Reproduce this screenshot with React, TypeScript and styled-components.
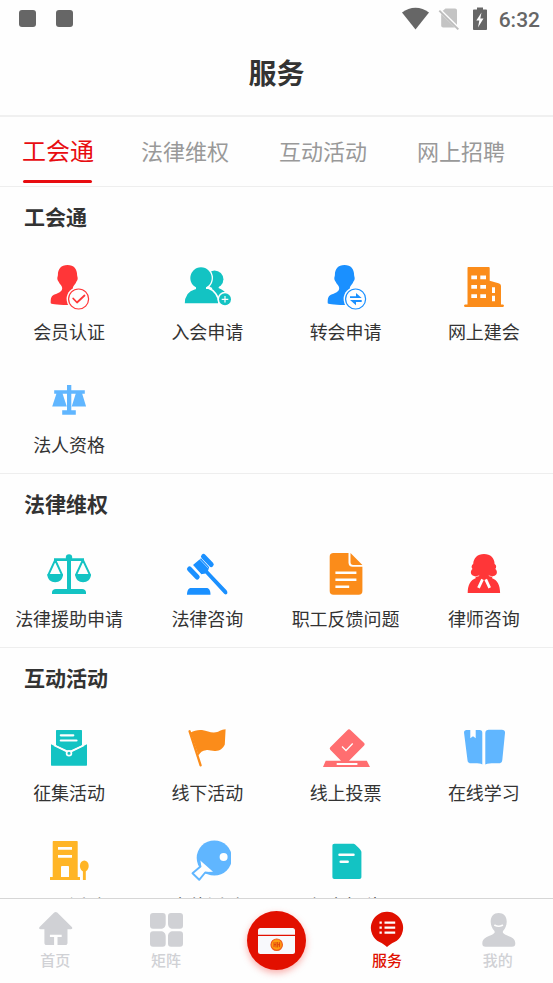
import React from "react";
import styled, { createGlobalStyle } from "styled-components";

const GlobalStyle = createGlobalStyle`
  * { box-sizing: border-box; }
  body {
    margin: 0;
    background: #fefefe;
    color: #333;
    font-family: "Noto Sans CJK SC", "Noto Sans", sans-serif;
  }
  button { font: inherit; border: 0; background: none; padding: 0; cursor: pointer; }
`;

const Screen = styled.div`
  display: flex;
  flex-direction: column;
  height: 100vh;
  overflow: hidden;
`;

const StatusBar = styled.div`
  display: flex;
  align-items: center;
  justify-content: space-between;
  height: 37px;
  padding: 0 13px 0 19px;
  color: #666;
`;

const StatusGroup = styled.div<{ $gap: number }>`
  display: flex;
  align-items: center;
  gap: ${(p) => p.$gap}px;
`;

const Notice = styled.span`
  width: 17px;
  height: 17px;
  border-radius: 3px;
  background: #666;
`;

const Clock = styled.time`
  padding-top: 2px;
  font: 500 21px/26px Roboto, sans-serif;
`;

const Header = styled.header`
  display: flex;
  justify-content: center;
  height: 80px;
  padding-top: 15px;
  border-bottom: 2px solid #f0f0f0;
`;

const Title = styled.h1`
  margin: 0;
  font-size: 28px;
  line-height: 40px;
  font-weight: 700;
`;

const Tabs = styled.nav`
  display: flex;
  flex-shrink: 0;
  gap: 50px;
  height: 70px;
  padding: 0 25px;
  border-bottom: 1px solid #eee;
  overflow: hidden;
`;

const Tab = styled.button<{ $active: boolean }>`
  position: relative;
  flex-shrink: 0;
  height: 69px;
  margin: ${(p) => (p.$active ? "0 -3px" : "0")};
  padding-bottom: 4px;
  font-size: ${(p) => (p.$active ? 24 : 22)}px;
  line-height: 32px;
  color: ${(p) => (p.$active ? "#e80c10" : "#999")};
  white-space: nowrap;

  &::after {
    content: "";
    position: absolute;
    left: 1px;
    right: 2px;
    bottom: 3px;
    height: 3px;
    border-radius: 2px;
    background: ${(p) => (p.$active ? "#e80c10" : "transparent")};
  }
`;

const Content = styled.main`
  flex: 1;
  min-height: 0;
  overflow-y: auto;
  scrollbar-width: none;
`;

const Section = styled.section`
  border-bottom: 1px solid #eee;
`;

const SectionTitle = styled.h2`
  margin: 0;
  padding: 14px 24px 16px;
  font-size: 21px;
  line-height: 30px;
  font-weight: 700;
`;

const Grid = styled.div`
  display: grid;
  grid-template-columns: repeat(4, 1fr);
`;

const Item = styled.button`
  display: flex;
  flex-direction: column;
  align-items: center;
  gap: 7px;
  padding: 16px 0;
  color: #333;
  font-size: 18px;
  line-height: 26px;
  white-space: nowrap;

  svg { display: block; width: 48px; height: 48px; }
`;

const BottomNav = styled.nav`
  display: grid;
  grid-template-columns: repeat(5, 1fr);
  flex-shrink: 0;
  height: 85px;
  border-top: 1px solid #d6d6d6;
  background: #fefefe;
`;

const NavItem = styled.button<{ $active?: boolean }>`
  display: flex;
  flex-direction: column;
  align-items: center;
  gap: 2px;
  padding-top: 12px;
  color: ${(p) => (p.$active ? "#e01000" : "#d0d1d5")};

  svg { display: block; width: 36px; height: 36px; }
`;

const NavLabel = styled.span`
  font-size: 15px;
  line-height: 22px;
  font-weight: 500;
`;

const CardButton = styled.span`
  display: block;
  width: 59px;
  height: 59px;
  border-radius: 50%;
  background: #e21000;
  box-shadow: 0 3px 7px rgba(240, 30, 20, 0.35);

  && svg { width: 59px; height: 59px; }
`;

const RED = "#ff3638";
const TEAL = "#13c3c3";
const BLUE = "#1a90ff";
const ORANGE = "#fb8c1a";
const SKY = "#60b6ff";

const Icon = ({ children }: { children: React.ReactNode }) => (
  <svg viewBox="0 0 48 48" fill="none" aria-hidden="true">{children}</svg>
);

const Bust = ({ color }: { color: string }) => (
  <>
    <path
      fill={color}
      d="M22.500 2C16 2 12.900 6 12.900 12c0 1.600-.9 2.400-.5 4.200.3 1.500 1 1.800 1.400 2.800 1 2.500 3.400 3.600 3.400 6 0 3.500-2.800 4.700-7 6.200-4 1.500-4.500 3.400-4.500 8.800 0 1.200 5 1.800 17 2l10-6-4.900-10c0-3.500 2.500-4.500 3.400-7 .4-1 1.100-1.300 1.400-2.800.4-1.800-.5-2.600-.5-4.200C32.100 6 29 2 22.500 2Z"
    />
    <circle cx="33.600" cy="36" r="12" fill="#fefefe" />
    <circle cx="33.600" cy="36" r="10" stroke={color} strokeWidth="1.200" />
  </>
);

const MemberIcon = () => (
  <Icon>
    <Bust color={RED} />
    <path d="m28.200 35.500 3.800 4 7.500-7" stroke={RED} strokeWidth="1.800" strokeLinecap="round" strokeLinejoin="round" />
  </Icon>
);

const JoinIcon = () => (
  <Icon>
    <circle cx="31.500" cy="16.300" r="8.900" fill={TEAL} />
    <path d="M29 23h7l-.5 2C40 27 43 29 44.500 33v6H30Z" fill={TEAL} />
    <circle cx="18" cy="15" r="12" fill="#fefefe" />
    <path d="M12 25.500C6 27 1 32 1 41h35c0-8-5-14-11-16Z" fill={TEAL} stroke="#fefefe" strokeWidth="1.500" />
    <circle cx="18" cy="15" r="10.700" fill={TEAL} />
    <path d="M13 23h10v5H13z" fill={TEAL} />
    <circle cx="42" cy="36.300" r="7.500" fill="#fefefe" />
    <circle cx="42" cy="36.300" r="6" fill={TEAL} />
    <path d="M42 33v6.600M38.700 36.300h6.600" stroke="#fefefe" strokeWidth="1.200" />
  </Icon>
);

const TransferIcon = () => (
  <Icon>
    <Bust color={BLUE} />
    <path fill={BLUE} d="m34 30 5.700 5.100H28v-1.800h6ZM28 37.100h11.700v1.800H34v3.400Z" />
  </Icon>
);

const BuildingIcon = () => (
  <Icon>
    <path
      fill={ORANGE}
      d="M8.500 4h20c.8 0 1.200.4 1.200 1.200v12.500l8.800 2.500c1.600.5 2.500 1.300 2.500 3v18.300h2c1.300 0 1.300 2.500 0 2.500H5c-1.300 0-1.300-2.500 0-2.500h2.500V5c0-.6.400-1 1-1Z"
    />
    <path
      fill="#fefefe"
      d="M11.300 12.500H17v3.800h-5.700zM20.300 12.500H26v3.800h-5.700zM11.300 22H17v3.800h-5.700zM20.300 22H26v3.800h-5.700zM11.300 31.200H17V35h-5.700zM20.300 31.200H26V35h-5.700zM32 24.300h3V30h-3zM32 32.700h3v5.600h-3z"
    />
  </Icon>
);

const BalanceIcon = () => (
  <Icon>
    <path
      fill={SKY}
      d="M22 9h4.300v5.300h13.500v3.500h-2.600l3.900 12.700H26.700l4-12.700h-4.400v16.500h4.500v4.400H17.200v-4.400H22V17.800h-4.400l4.200 12.700H7.200l4.200-12.700H9.200v-3.500H22Z"
    />
  </Icon>
);

const ScalesIcon = () => (
  <Icon>
    <circle cx="24" cy="7.500" r="3.200" fill={TEAL} />
    <path d="M9 8.300h30V11H9zM22 8h4v32h-4zM7 44v-1.500c0-2 1.500-3.500 4-3.500h26c2.500 0 4 1.500 4 3.500V44Z" fill={TEAL} />
    <path d="M10.200 10 3.300 25h13.800ZM37.900 10 31 25h14Z" stroke={TEAL} strokeWidth="1.900" strokeLinejoin="round" />
    <path d="M2.300 24.300H18c0 5-3.500 8-7.800 8s-7.900-3-7.900-8ZM30.200 24.300H46c0 5-3.600 8-7.900 8s-7.900-3-7.900-8Z" fill={TEAL} />
  </Icon>
);

const GavelIcon = () => (
  <Icon>
    <path d="m20.500 6.500 7.700 8M6.500 19l7.700 8" stroke={BLUE} strokeWidth="5" strokeLinecap="round" />
    <path d="m10 15 8-6.800 8.200 9-1.200 3.600 18.500 19.400c2 2.500.4 5.500-2.300 3.600L22.500 23.500l-4.300.7Z" fill={BLUE} />
    <path d="m9.700 15.300 8.700 9.200M16.500 9l8.700 9.200" stroke="#fefefe" strokeWidth=".5" />
    <path d="M4 44.700c0-4 1.500-6.700 4-6.700h15.500c2.500 0 4 2.700 4 6.700Z" fill={BLUE} />
  </Icon>
);

const DocumentIcon = () => (
  <Icon>
    <path
      fill={ORANGE}
      d="M11.500 3h15v9.500c0 2.800 1.500 4.200 4.200 4.200h9.700V41c0 2.500-1.300 3.700-3.700 3.700H11.500C9 44.700 7.700 43.500 7.700 41V6.700C7.700 4.200 9 3 11.500 3ZM28.500 3l11.900 12h-9c-2 0-2.900-1-2.900-2.900Z"
    />
    <path d="M13.400 22.700h21M13.400 29.700h21M13.400 36.700h13.800" stroke="#fefefe" strokeWidth="2.400" />
  </Icon>
);

const LawyerIcon = () => (
  <Icon>
    <path
      fill={RED}
      d="M24 4c-6.500 0-10.500 4-10.800 10-2 1.300-2 3.500-.7 5-2.700 2-2 6.800 2 7l1.500 2C10.500 30 7.700 35 7.700 43h32.400c0-8-2.800-13-8.300-15l1.500-2c4-.2 4.700-5 2-7 1.300-1.500 1.300-3.700-.7-5C34.500 8 30.500 4 24 4Z"
    />
    <path d="m22.500 29.300-4 8.500M25.700 29.300l4 8.500" stroke="#fefefe" strokeWidth="2.800" />
    <path d="M15.200 26.500c1.500.2 3-.3 4-1M32.800 26.500c-1.500.2-3-.3-4-1" stroke="#fefefe" strokeWidth=".7" />
  </Icon>
);

const EnvelopeIcon = () => (
  <Icon>
    <path d="M12 6h24c.7 0 1 .3 1 1v14.300l-13 6-13-6V7c0-.7.300-1 1-1Z" fill={TEAL} />
    <path d="M15.800 11.300h12.500M15.800 16.500h15.700" stroke="#fefefe" strokeWidth="2.200" strokeLinecap="round" />
    <path d="M6 20.300 24 29l18-8.700v20.400c0 .7-.3 1-1 1H7c-.7 0-1-.3-1-1Z" fill={TEAL} />
    <path d="m9 21.300 15 7.200 15-7.200" stroke="#fefefe" strokeWidth="1.600" />
    <circle cx="24" cy="29.300" r="2.400" fill={TEAL} stroke="#fefefe" strokeWidth="1.700" />
  </Icon>
);

const FlagIcon = () => (
  <Icon>
    <path d="m6.600 7.300 11 34" stroke={ORANGE} strokeWidth="2.300" strokeLinecap="round" />
    <path
      fill={ORANGE}
      d="M7.500 8.500C11 6.500 15 5.600 19 6c5 .6 8 2.800 12 2.600 5-.2 7-3.300 11.600-3.300l-.8 15.200c-2 4-4.800 6.300-9.300 6.500-4 .2-6-1.300-9.500-.8-3.500.5-6 2-7.500 5.300Z"
    />
  </Icon>
);

const VoteIcon = () => (
  <Icon>
    <path
      fill="#ff6e70"
      d="M25.300 6.200c1.200-1.200 2.200-1.200 3.400 0l13.200 12.600c1 1 1 2 0 3L27 36.700h17.800L48 43H1l2.700-6.300H19L8.500 26c-1-1-1-2 0-3Z"
    />
    <path d="M14.700 40h20.700" stroke="#fefefe" strokeWidth="2" />
    <path d="m20 22.500 4 4 6.700-7" stroke="#fefefe" strokeWidth="1.300" />
  </Icon>
);

const BookIcon = () => (
  <Icon>
    <path
      fill={SKY}
      d="M4 8.500C4 7 5 6 6.500 6h3.800v8.200l2.700-2 2.700 2V6h3.800c2 0 2.800 1 2.800 2.800v31.700C20 39 16 39.300 11 39.300c-2.200 0-3.300-.8-3.500-3ZM25.300 9c0-2 1.500-3.200 3.500-3.200h13c2.200 0 3.400 1.200 3.200 3.200l-2.700 27c-.2 2.200-1.300 3.300-3.500 3.300-6 0-10-.3-13.500 1.200Z"
    />
  </Icon>
);

const ParkIcon = () => (
  <Icon>
    <path d="M8.700 4h23c.7 0 1 .3 1 1v35H35v3H5v-3h2.700V5c0-.7.300-1 1-1Z" fill="#ffb526" />
    <path d="M13 11.300h14M13 19.300h14" stroke="#fefefe" strokeWidth="2.700" />
    <path d="M17 29h6.200c.5 0 .8.3.8.800V40h-8V29.800c0-.5.300-.8 1-.8Z" fill="#fefefe" />
    <ellipse cx="39.300" cy="29" rx="4.400" ry="5.600" fill="#ffb526" />
    <path d="M37.900 33h2.900v10h-2.900z" fill="#ffb526" />
  </Icon>
);

const PaddleIcon = () => (
  <Icon>
    <circle cx="31.300" cy="21" r="17.600" fill={SKY} />
    <circle cx="40.600" cy="20" r="4" fill="#fefefe" />
    <path d="m17.300 23.500.7 6-8.500 6.800 6.700 7 6.300-8.200 7.500-.3Z" fill="#fefefe" />
    <path d="m16 23.500 1.500 6-8 6.800 6.700 6.500 6-7.300 6.500 1" stroke={SKY} strokeWidth="1.900" strokeLinejoin="round" />
  </Icon>
);

const NoteIcon = () => (
  <Icon>
    <path d="M12.400 6.700h19.200c1.500 0 7.800 6.500 7.800 8V40c0 1.300-.7 2-2 2h-25c-1.300 0-2-.7-2-2V8.700c0-1.300.7-2 2-2Z" fill={TEAL} />
    <path d="M17.500 17.700h14M18.700 24.700h7" stroke="#fefefe" strokeWidth="2.500" strokeLinecap="round" />
  </Icon>
);

const sections = [
  {
    title: "工会通",
    items: [
      ["会员认证", MemberIcon],
      ["入会申请", JoinIcon],
      ["转会申请", TransferIcon],
      ["网上建会", BuildingIcon],
      ["法人资格", BalanceIcon],
    ],
  },
  {
    title: "法律维权",
    items: [
      ["法律援助申请", ScalesIcon],
      ["法律咨询", GavelIcon],
      ["职工反馈问题", DocumentIcon],
      ["律师咨询", LawyerIcon],
    ],
  },
  {
    title: "互动活动",
    items: [
      ["征集活动", EnvelopeIcon],
      ["线下活动", FlagIcon],
      ["线上投票", VoteIcon],
      ["在线学习", BookIcon],
      ["园区活动", ParkIcon],
      ["文体活动", PaddleIcon],
      ["征文投稿", NoteIcon],
    ],
  },
] as { title: string; items: [string, React.ComponentType][] }[];

const tabs = ["工会通", "法律维权", "互动活动", "网上招聘"];

const StatusIcons = () => (
  <svg width="86" height="24" viewBox="0 0 86 24" fill="#666" aria-hidden="true">
    <path d="M0 5.500C8-.8 19-.8 27 5.500L13.500 22.500Z" />
    <path d="M43.500 1.500H53c1.200 0 2 .8 2 2v14.800L40.500 4Z" fill="#c4c4c4" />
    <path d="M39.200 7v11.500c0 1.200.8 2 2 2H53Z" fill="#c4c4c4" />
    <path d="m38.300 2.600 19 18.800" stroke="#fefefe" strokeWidth="1.500" />
    <path d="m37.300 3.600 19 18.800" stroke="#bdbdbd" strokeWidth="2" />
    <path d="M75 .5h6v2h3.200c.5 0 .8.300.8.800V22c0 .6-.3 1-.8 1H71.800c-.5 0-.8-.4-.8-1V3.300c0-.5.300-.8.8-.8H75Z" />
    <path d="M79.500 5.500 74.300 13.500h3L76 20.500l5.500-9h-3.200Z" fill="#fefefe" />
  </svg>
);

const HomeIcon = () => (
  <svg viewBox="0 0 36 36" fill="currentColor" aria-hidden="true">
    <path d="M17.200 1.600c1-.9 2-.9 3 0L34.800 16c1 1.100.5 2.300-1 2.300h-3.300v13.400c0 1.500-.8 2.300-2.200 2.300h-7.800v-8h4.200v-2.300H12.900V26h4.200v8H9.700c-1.500 0-2.300-.8-2.300-2.300V18.300H3.600c-1.500 0-2-1.200-1-2.300Z" />
  </svg>
);

const MatrixIcon = () => (
  <svg viewBox="0 0 36 36" fill="currentColor" aria-hidden="true">
    <path d="M5 2h9.700c2 0 3 1 3 3v7.700c0 3-2 5-5 5H5c-2 0-3-1-3-3V5c0-2 1-3 3-3ZM23 2h9c2 0 3 1 3 3v9.700c0 2-1 3-3 3h-7c-3 0-5-2-5-5V5c0-2 1-3 3-3ZM5 20.200h7.700c3 0 5 2 5 5v7.500c0 2-1 3-3 3H5c-2 0-3-1-3-3v-9.500c0-2 1-3 3-3ZM25 20.200h7c2 0 3 1 3 3v9.500c0 2-1 3-3 3h-9c-2 0-3-1-3-3v-7.500c0-3 2-5 5-5Z" />
  </svg>
);

const ServiceIcon = () => (
  <svg viewBox="0 0 36 36" fill="currentColor" aria-hidden="true">
    <path d="M18 .8a16 16 0 0 0-7.500 30.200c3 1.500 5 2.500 7.500 5 2.500-2.500 4.500-3.500 7.500-5A16 16 0 0 0 18 .8Z" />
    <path d="M10.500 11.700h2.300M10.500 16.700h2.300M10.500 21.700h2.300M15.500 11.700h10.700M15.500 16.700h10.700M15.500 21.700h10.700" stroke="#fefefe" strokeWidth="2.200" />
  </svg>
);

const ProfileIcon = () => (
  <svg viewBox="0 0 36 36" fill="currentColor" aria-hidden="true">
    <path d="M18.700 2c-5 0-8.200 3.700-8 9 .1 3.500 1.500 6.500 3.600 8.800 1 1.700.2 2.700-2.300 3.900C7 26 2.300 27 2.300 32.500c0 2.200 1 3.200 3.200 3.200H32c2.300 0 3.300-1 3.300-3.200 0-5.500-4.700-6.500-9.800-8.800-2.500-1.200-3.300-2.200-2.300-3.900 2.100-2.300 3.400-5.300 3.500-8.800.2-5.300-3-9-8-9Z" />
    <path d="M14.800 14.300c2.300 1.200 5.400 1.200 7.700 0" stroke="#fefefe" strokeWidth="1.600" strokeLinecap="round" fill="none" />
  </svg>
);

const CardIcon = () => (
  <svg viewBox="0 0 59 59" fill="none" aria-hidden="true">
    <rect x="11" y="17" width="37" height="26" rx="2.500" fill="#f8f9fc" />
    <path d="M11 24.300h37" stroke="#e21000" strokeWidth="1.300" />
    <circle cx="29.700" cy="33.700" r="5.700" fill="#ff9d12" stroke="#ef5a1c" strokeWidth="1.200" />
    <path d="M27 31.200v5M29 31v5.500M30.700 31v5.500M32.600 31.200v5M27 33.700h2M30.700 33.700h2" stroke="#dc3a10" strokeWidth=".9" />
  </svg>
);

export default function App() {
  return (
    <Screen>
      <GlobalStyle />
      <StatusBar>
        <StatusGroup $gap={20}>
          <Notice />
          <Notice />
        </StatusGroup>
        <StatusGroup $gap={11}>
          <StatusIcons />
          <Clock>6:32</Clock>
        </StatusGroup>
      </StatusBar>
      <Header>
        <Title>服务</Title>
      </Header>
      <Tabs>
        {tabs.map((tab, i) => (
          <Tab key={tab} type="button" $active={i === 0}>{tab}</Tab>
        ))}
      </Tabs>
      <Content>
        {sections.map(({ title, items }) => (
          <Section key={title}>
            <SectionTitle>{title}</SectionTitle>
            <Grid>
              {items.map(([label, Glyph]) => (
                <Item key={label} type="button">
                  <Glyph />
                  <span>{label}</span>
                </Item>
              ))}
            </Grid>
          </Section>
        ))}
      </Content>
      <BottomNav>
        <NavItem type="button"><HomeIcon /><NavLabel>首页</NavLabel></NavItem>
        <NavItem type="button"><MatrixIcon /><NavLabel>矩阵</NavLabel></NavItem>
        <NavItem type="button" aria-label="工会卡"><CardButton><CardIcon /></CardButton></NavItem>
        <NavItem type="button" $active><ServiceIcon /><NavLabel>服务</NavLabel></NavItem>
        <NavItem type="button"><ProfileIcon /><NavLabel>我的</NavLabel></NavItem>
      </BottomNav>
    </Screen>
  );
}
